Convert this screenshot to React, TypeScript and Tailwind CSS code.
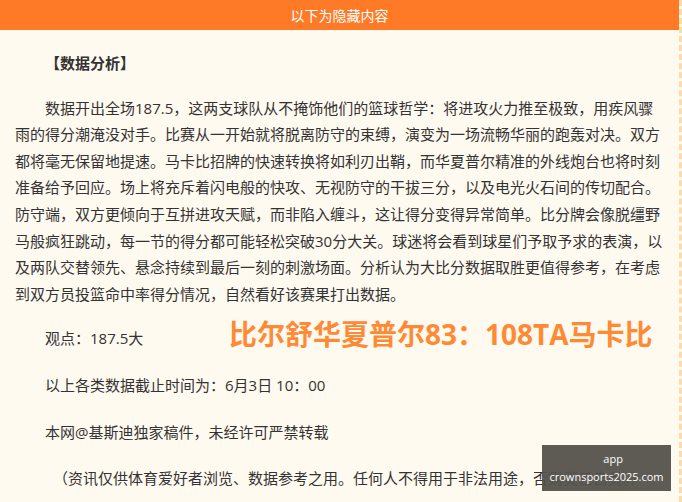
const Para = ({ children, className = "" }: { children: React.ReactNode; className?: string }) => (
  <p className={`text-[15px] leading-[26.6px] text-[#333] ${className}`}>{children}</p>
);

export default function App() {
  return (
    <div className="relative h-[502px] w-[682px] overflow-hidden bg-[#fffaf0] font-['Open_Sans','Noto_Sans_CJK_SC',sans-serif]">
      <div className="h-full w-[682px] border-r-[3px] border-dashed border-[#fddca6]">
        <div className="flex h-[30px] items-center justify-center bg-[#ff7a27] text-[14px] text-white">
          以下为隐藏内容
        </div>
        <div className="flex flex-col px-[15px] pt-5">
          <Para className="pl-[30px] font-bold">【数据分析】</Para>
          <Para className="mt-[18px] indent-[30px]">
            数据开出全场187.5，这两支球队从不掩饰他们的篮球哲学：将进攻火力推至极致，用疾风骤雨的得分潮淹没对手。比赛从一开始就将脱离防守的束缚，演变为一场流畅华丽的跑轰对决。双方都将毫无保留地提速。马卡比招牌的快速转换将如利刃出鞘，而华夏普尔精准的外线炮台也将时刻准备给予回应。场上将充斥着闪电般的快攻、无视防守的干拔三分，以及电光火石间的传切配合。防守端，双方更倾向于互拼进攻天赋，而非陷入缠斗，这让得分变得异常简单。比分牌会像脱缰野马般疯狂跳动，每一节的得分都可能轻松突破30分大关。球迷将会看到球星们予取予求的表演，以及两队交替领先、悬念持续到最后一刻的刺激场面。分析认为大比分数据取胜更值得参考，在考虑到双方员投篮命中率得分情况，自然看好该赛果打出数据。
          </Para>
          <Para className="mt-[18px] pl-[30px]">观点：187.5大</Para>
          <Para className="mt-[20px] pl-[30px]">以上各类数据截止时间为：6月3日 10：00</Para>
          <Para className="mt-[20px] pl-[30px]">本网@基斯迪独家稿件，未经许可严禁转载</Para>
          <Para className="mt-[20px] whitespace-nowrap pl-[38px]">（资讯仅供体育爱好者浏览、数据参考之用。任何人不得用于非法用途，否则责任自负。）</Para>
        </div>
      </div>

      <div className="absolute left-[229px] top-[316px] whitespace-nowrap text-[28px] font-bold leading-[36px] text-[#ff8a35]">
        比尔舒华夏普尔83：108TA马卡比
      </div>

      <div className="absolute left-[542px] top-[445px] flex h-[46px] w-[129px] flex-col items-center justify-center bg-[#55524c]/95 text-[11px] leading-[18px] text-white">
        <span>{"\uE000\uE001\uE002\uE003"}app{"\uE004\uE005"}</span>
        <span>crownsports2025.com</span>
      </div>
    </div>
  );
}
